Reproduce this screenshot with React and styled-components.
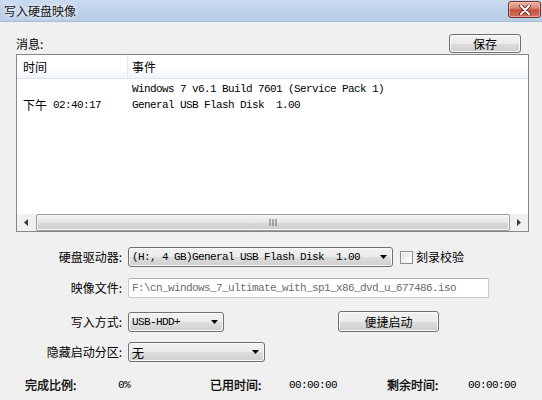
import React from "react";
import styled, { createGlobalStyle } from "styled-components";

const GlobalStyle = createGlobalStyle`
  html, body { margin: 0; padding: 0; }
  body {
    width: 542px; height: 400px; overflow: hidden;
    font-family: "Noto Sans CJK SC", "Liberation Sans", sans-serif;
    font-size: 12px; color: #000;
  }
`;

const Window = styled.div`
  width: 542px;
  height: 400px;
  background: #f0f0f0;
  display: flex;
  flex-direction: column;
  overflow: hidden;
`;

const TitleBar = styled.div`
  height: 22px;
  flex: none;
  display: flex;
  align-items: center;
  justify-content: space-between;
  padding: 0 1px 0 4px;
  background: linear-gradient(to bottom, #c9dbef 0%, #bdd1e9 50%, #b8cde7 100%);
  border-bottom: 1px solid #a8bcd5;
  box-sizing: border-box;
`;

const TitleText = styled.span`
  font-size: 12px;
  line-height: 16px;
  color: #141414;
  text-shadow: 0 0 4px #fff, 0 0 6px rgba(255, 255, 255, 0.9);
`;

const CloseButton = styled.div`
  width: 31px;
  height: 15px;
  margin-top: -2px;
  border: 1px solid #7a2e24;
  border-radius: 3px;
  background: linear-gradient(to bottom, #eab0a3 0%, #d98a78 40%, #c7503c 52%, #d0715f 100%);
  display: flex;
  align-items: center;
  justify-content: center;
  box-shadow: inset 0 0 0 1px rgba(255, 220, 210, 0.5);
`;

const Content = styled.div`
  flex: 1;
  display: flex;
  flex-direction: column;
  padding: 12px 13px 0 16px;
`;

const TopRow = styled.div`
  display: flex;
  justify-content: space-between;
  align-items: center;
  height: 19px;
  padding-right: 8px;
`;

const Label = styled.span`
  font-size: 12px;
  line-height: 16px;
  white-space: nowrap;
  text-align: ${(p) => (p.$right ? "right" : "left")};
  color: #000;
  -webkit-text-stroke: ${(p) => (p.$strong ? "0.3px #000" : "0")};
`;

const Button = styled.div`
  width: ${(p) => p.$w}px;
  height: ${(p) => p.$h}px;
  box-sizing: border-box;
  border: 1px solid #707070;
  border-radius: 3px;
  background: linear-gradient(to bottom, #f2f2f2 0%, #ebebeb 50%, #dddddd 51%, #cfcfcf 100%);
  box-shadow: inset 0 0 0 1px #fbfbfb;
  display: flex;
  align-items: center;
  justify-content: center;
  font-size: 12px;
  line-height: 16px;
`;

const ListBox = styled.div`
  margin-top: 1px;
  width: 513px;
  height: 178px;
  box-sizing: border-box;
  border: 1px solid #828790;
  background: #fff;
  display: flex;
  flex-direction: column;
`;

const ListHeader = styled.div`
  height: 24px;
  flex: none;
  box-sizing: border-box;
  display: grid;
  grid-template-columns: 111px 1fr;
  background: linear-gradient(to bottom, #ffffff 0%, #ffffff 55%, #f1f5fb 100%);
  border-bottom: 1px solid #dfe3ea;
`;

const HeaderCell = styled.div`
  display: flex;
  align-items: center;
  padding-left: ${(p) => p.$pl}px;
  border-right: ${(p) => (p.$divider ? "1px solid #e4e8ee" : "none")};
  font-size: 12px;
`;

const Rows = styled.div`
  padding-top: 2px;
  flex: 1;
`;

const Row = styled.div`
  display: grid;
  grid-template-columns: 111px 1fr;
  height: 16px;
  line-height: 16px;
`;

const Cell = styled.div`
  padding-left: ${(p) => p.$pl}px;
  white-space: pre;
  display: flex;
  align-items: center;
`;

const Mono = styled.span`
  font-family: "Liberation Mono", "DejaVu Sans Mono", monospace;
  font-size: 11px;
  letter-spacing: -0.6px;
  white-space: pre;
  color: ${(p) => p.$color || "inherit"};
`;

const Cjk = styled.span`
  font-family: "Noto Sans CJK SC", sans-serif;
  font-size: 12px;
`;

const HScroll = styled.div`
  height: 17px;
  flex: none;
  display: flex;
  background: #f0f0f0;
`;

const ArrowBtn = styled.div`
  width: 18px;
  display: flex;
  align-items: center;
  justify-content: center;
`;

const Thumb = styled.div`
  flex: 1;
  box-sizing: border-box;
  border: 1px solid #9d9d9d;
  border-radius: 2px;
  margin: 0 0 0 1px;
  background: linear-gradient(to bottom, #f3f3f3 0%, #e6e6e6 50%, #d8d8d8 51%, #cfcfcf 100%);
  box-shadow: inset 0 0 0 1px #f8f8f8;
  display: flex;
  align-items: center;
  justify-content: center;
`;

const FormRow = styled.div`
  display: grid;
  grid-template-columns: 106px 1fr;
  column-gap: 6px;
  align-items: center;
  height: 20px;
  margin-top: ${(p) => p.$mt}px;
`;

const Controls = styled.div`
  display: flex;
  align-items: center;
`;

const Select = styled.div`
  width: ${(p) => p.$w}px;
  height: 20px;
  box-sizing: border-box;
  border: 1px solid #707070;
  border-radius: 3px;
  background: linear-gradient(to bottom, #f2f2f2 0%, #ebebeb 50%, #dddddd 51%, #cfcfcf 100%);
  box-shadow: inset 0 0 0 1px #fafafa;
  display: flex;
  align-items: center;
  justify-content: space-between;
  padding: 0 5px 0 3px;
`;

const TextInput = styled.div`
  width: 361px;
  height: 20px;
  box-sizing: border-box;
  border: 1px solid #c6c8cc;
  border-top-color: #aeb0b5;
  border-radius: 2px;
  background: #fff;
  display: flex;
  align-items: center;
  padding-left: 3px;
`;

const Check = styled.div`
  width: 13px;
  height: 13px;
  box-sizing: border-box;
  margin-left: 7px;
  border: 1px solid #8e8f8f;
  background: linear-gradient(135deg, #dcdcdc 0%, #f6f6f6 60%, #ffffff 100%);
  box-shadow: inset 0 0 0 1px #f4f4f4;
`;

const CheckLabel = styled.span`
  margin-left: 3px;
  font-size: 12px;
  line-height: 16px;
`;

const Spacer = styled.div`
  width: ${(p) => p.$w}px;
`;

const Stats = styled.div`
  margin-top: 15px;
  display: grid;
  grid-template-columns: 93px 92px 79px 98px 81px 1fr;
  padding-left: 9px;
  height: 16px;
  align-items: center;
`;

const Arrow = () => (
  <svg width="7" height="4" viewBox="0 0 7 4">
    <path d="M0 0 H7 L3.5 4 Z" fill="#000" />
  </svg>
);

export default function App() {
  return (
    <>
      <GlobalStyle />
      <Window>
        <TitleBar>
          <TitleText>写入硬盘映像</TitleText>
          <CloseButton>
            <svg width="12" height="10" viewBox="0 0 12 10">
              <path d="M2 1 L10 9 M10 1 L2 9" stroke="#5a1a12" strokeWidth="3.6" strokeLinecap="round" />
              <path d="M2 1 L10 9 M10 1 L2 9" stroke="#fff" strokeWidth="2" strokeLinecap="round" />
            </svg>
          </CloseButton>
        </TitleBar>
        <Content>
          <TopRow>
            <Label>消息:</Label>
            <Button $w={72} $h={19}>保存</Button>
          </TopRow>
          <ListBox>
            <ListHeader>
              <HeaderCell $pl={6} $divider>时间</HeaderCell>
              <HeaderCell $pl={4}>事件</HeaderCell>
            </ListHeader>
            <Rows>
              <Row>
                <Cell $pl={6} />
                <Cell $pl={4}>
                  <Mono>Windows 7 v6.1 Build 7601 (Service Pack 1)</Mono>
                </Cell>
              </Row>
              <Row>
                <Cell $pl={6}>
                  <Cjk>下午</Cjk>
                  <Mono> 02:40:17</Mono>
                </Cell>
                <Cell $pl={4}>
                  <Mono>General USB Flash Disk  1.00</Mono>
                </Cell>
              </Row>
            </Rows>
            <HScroll>
              <ArrowBtn>
                <svg width="4" height="7" viewBox="0 0 4 7">
                  <path d="M4 0 V7 L0 3.5 Z" fill="#3c3c3c" />
                </svg>
              </ArrowBtn>
              <Thumb>
                <svg width="8" height="7" viewBox="0 0 8 7">
                  <path d="M1 0 V7 M4 0 V7 M7 0 V7" stroke="#6a6a6a" strokeWidth="1" />
                </svg>
              </Thumb>
              <ArrowBtn>
                <svg width="4" height="7" viewBox="0 0 4 7">
                  <path d="M0 0 V7 L4 3.5 Z" fill="#3c3c3c" />
                </svg>
              </ArrowBtn>
            </HScroll>
          </ListBox>

          <FormRow $mt={15}>
            <Label $right>硬盘驱动器:</Label>
            <Controls>
              <Select $w={265}>
                <Mono>(H:, 4 GB)General USB Flash Disk  1.00</Mono>
                <Arrow />
              </Select>
              <Check />
              <CheckLabel>刻录校验</CheckLabel>
            </Controls>
          </FormRow>

          <FormRow $mt={11}>
            <Label $right>映像文件:</Label>
            <Controls>
              <TextInput>
                <Mono $color="#6d6d6d">F:\cn_windows_7_ultimate_with_sp1_x86_dvd_u_677486.iso</Mono>
              </TextInput>
            </Controls>
          </FormRow>

          <FormRow $mt={13}>
            <Label $right>写入方式:</Label>
            <Controls>
              <Select $w={96}>
                <Mono>USB-HDD+</Mono>
                <Arrow />
              </Select>
              <Spacer $w={114} />
              <Button $w={101} $h={21}>便捷启动</Button>
            </Controls>
          </FormRow>

          <FormRow $mt={11}>
            <Label $right>隐藏启动分区:</Label>
            <Controls>
              <Select $w={137}>
                <Cjk>无</Cjk>
                <Arrow />
              </Select>
            </Controls>
          </FormRow>

          <Stats>
            <Label $strong>完成比例:</Label>
            <Mono>0%</Mono>
            <Label $strong>已用时间:</Label>
            <Mono>00:00:00</Mono>
            <Label $strong>剩余时间:</Label>
            <Mono>00:00:00</Mono>
          </Stats>
        </Content>
      </Window>
    </>
  );
}
